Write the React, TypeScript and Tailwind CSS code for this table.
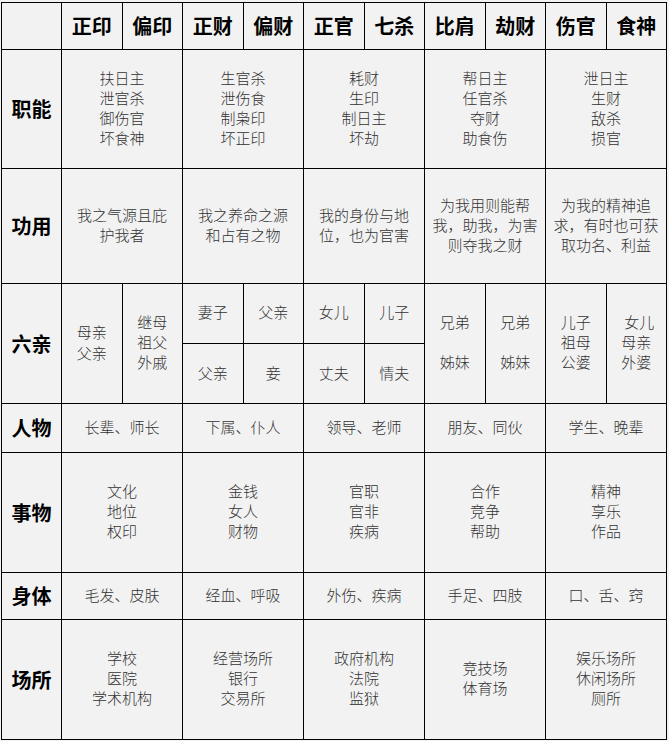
import React from "react";

const body = "font-['Noto_Sans_CJK_SC',sans-serif]";

function C({ className = "", children }: { className?: string; children?: React.ReactNode }) {
  return (
    <div className={`bg-[#f2f2f2] flex flex-col items-center justify-center text-center ${className}`}>
      {children}
    </div>
  );
}

function H({ children }: { children: React.ReactNode }) {
  return (
    <C className="text-[20px] font-bold text-black leading-none">
      {children}
    </C>
  );
}

function L({ children, className = "" }: { children: React.ReactNode; className?: string }) {
  return (
    <C className={`text-[20px] font-bold text-black leading-none ${className}`}>
      {children}
    </C>
  );
}

function T({ lines, className = "" }: { lines: string[]; className?: string }) {
  return (
    <C className={`text-[15px] leading-[20px] font-light text-[#333] pb-[3px] ${className}`}>
      {lines.map((l, i) => (
        <span key={i} className="whitespace-nowrap">
          {l}
        </span>
      ))}
    </C>
  );
}

export default function App() {
  return (
    <div className={`w-[669px] h-[741px] bg-[#f2f2f2] pt-[2px] pl-px ${body}`}>
      <div className="w-[666px] bg-black p-px gap-px grid grid-cols-[59px_repeat(10,minmax(0,1fr))] grid-rows-[46px_118px_114px_59px_59px_48px_119px_46px_119px]">
        {/* header */}
        <C />
        <H>正印</H>
        <H>偏印</H>
        <H>正财</H>
        <H>偏财</H>
        <H>正官</H>
        <H>七杀</H>
        <H>比肩</H>
        <H>劫财</H>
        <H>伤官</H>
        <H>食神</H>

        {/* 职能 */}
        <L>职能</L>
        <T className="col-span-2" lines={["扶日主", "泄官杀", "御伤官", "坏食神"]} />
        <T className="col-span-2" lines={["生官杀", "泄伤食", "制枭印", "坏正印"]} />
        <T className="col-span-2" lines={["耗财", "生印", "制日主", "坏劫"]} />
        <T className="col-span-2" lines={["帮日主", "任官杀", "夺财", "助食伤"]} />
        <T className="col-span-2" lines={["泄日主", "生财", "敌杀", "损官"]} />

        {/* 功用 */}
        <L>功用</L>
        <T className="col-span-2" lines={["我之气源且庇", "护我者"]} />
        <T className="col-span-2" lines={["我之养命之源", "和占有之物"]} />
        <T className="col-span-2" lines={["我的身份与地", "位，也为官害"]} />
        <T className="col-span-2" lines={["为我用则能帮", "我，助我，为害", "则夺我之财"]} />
        <T className="col-span-2" lines={["为我的精神追", "求，有时也可获", "取功名、利益"]} />

        {/* 六亲 */}
        <L className="row-span-2">六亲</L>
        <T className="row-span-2 leading-[21px]" lines={["母亲", "父亲"]} />
        <T className="row-span-2" lines={["继母", "祖父", "外戚"]} />
        <T lines={["妻子"]} />
        <T lines={["父亲"]} />
        <T lines={["女儿"]} />
        <T lines={["儿子"]} />
        <T className="row-span-2" lines={["兄弟", "\u00a0", "姊妹"]} />
        <T className="row-span-2" lines={["兄弟", "\u00a0", "姊妹"]} />
        <T className="row-span-2" lines={["儿子", "祖母", "公婆"]} />
        <C className="row-span-2 text-[15px] leading-[20px] font-light text-[#333] pb-[3px]">
          <span className="whitespace-nowrap pl-[6px]">女儿</span>
          <span className="whitespace-nowrap">母亲</span>
          <span className="whitespace-nowrap">外婆</span>
        </C>
        <T className="pt-[2px]" lines={["父亲"]} />
        <T className="pt-[2px]" lines={["妾"]} />
        <T className="pt-[2px]" lines={["丈夫"]} />
        <T className="pt-[2px]" lines={["情夫"]} />

        {/* 人物 */}
        <L>人物</L>
        <T className="col-span-2" lines={["长辈、师长"]} />
        <T className="col-span-2" lines={["下属、仆人"]} />
        <T className="col-span-2" lines={["领导、老师"]} />
        <T className="col-span-2" lines={["朋友、同伙"]} />
        <T className="col-span-2" lines={["学生、晚辈"]} />

        {/* 事物 */}
        <L>事物</L>
        <T className="col-span-2" lines={["文化", "地位", "权印"]} />
        <T className="col-span-2" lines={["金钱", "女人", "财物"]} />
        <T className="col-span-2" lines={["官职", "官非", "疾病"]} />
        <T className="col-span-2" lines={["合作", "竞争", "帮助"]} />
        <T className="col-span-2" lines={["精神", "享乐", "作品"]} />

        {/* 身体 */}
        <L>身体</L>
        <T className="col-span-2" lines={["毛发、皮肤"]} />
        <T className="col-span-2" lines={["经血、呼吸"]} />
        <T className="col-span-2" lines={["外伤、疾病"]} />
        <T className="col-span-2" lines={["手足、四肢"]} />
        <T className="col-span-2" lines={["口、舌、窍"]} />

        {/* 场所 */}
        <L>场所</L>
        <T className="col-span-2" lines={["学校", "医院", "学术机构"]} />
        <T className="col-span-2" lines={["经营场所", "银行", "交易所"]} />
        <T className="col-span-2" lines={["政府机构", "法院", "监狱"]} />
        <T className="col-span-2" lines={["竞技场", "体育场"]} />
        <T className="col-span-2" lines={["娱乐场所", "休闲场所", "厕所"]} />
      </div>
    </div>
  );
}
